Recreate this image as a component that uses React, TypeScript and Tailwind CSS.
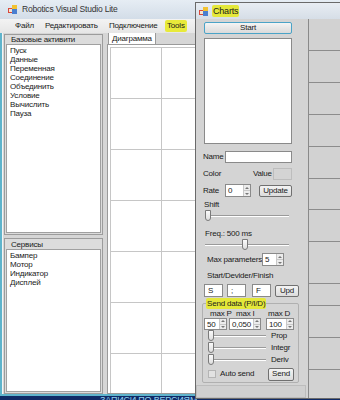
import React from "react";

const font = { fontFamily: '"Liberation Sans", Arial, sans-serif' };

function AppIcon() {
  return (
    <svg width="10" height="9" viewBox="0 0 10 9">
      <rect x="0" y="3" width="5" height="5" fill="#d9483b" />
      <rect x="4" y="0" width="5" height="5" fill="#f2c230" />
      <rect x="4" y="4" width="5" height="5" fill="#4a7fd0" />
      <rect x="1" y="4" width="3" height="3" fill="#f5e6d0" />
    </svg>
  );
}

function Spin({ value, w }: { value: string; w: string }) {
  return (
    <div className={`flex h-full border border-[#8a8a8a] bg-white ${w}`}>
      <span className="flex-1 pl-[2px] leading-[11px]">{value}</span>
      <div className="flex w-[7px] flex-col border-l border-[#c8c8c8] bg-[#ececec]">
        <div className="flex flex-1 items-center justify-center border-b border-[#c8c8c8]">
          <div className="h-0 w-0 border-x-[2px] border-b-[2px] border-x-transparent border-b-[#777]" />
        </div>
        <div className="flex flex-1 items-center justify-center">
          <div className="h-0 w-0 border-x-[2px] border-t-[2px] border-x-transparent border-t-[#777]" />
        </div>
      </div>
    </div>
  );
}

function Button({ label, w, h = "h-[12px]" }: { label: string; w: string; h?: string }) {
  return (
    <div
      className={`flex ${h} ${w} items-center justify-center rounded-[2px] border border-[#707070] bg-gradient-to-b from-[#f4f4f4] to-[#dcdcdc] leading-none`}
    >
      {label}
    </div>
  );
}

function Slider({ pos, w }: { pos: number; w: string }) {
  return (
    <div className={`relative h-[12px] ${w}`}>
      <div className="absolute left-0 right-0 top-[5px] h-[2px] border-t border-[#9a9a9a] border-b border-b-white" />
      <div
        className="absolute top-0 h-[11px] w-[6px] rounded-b-[3px] border border-[#7a7a7a] bg-gradient-to-b from-[#fafafa] to-[#dedede]"
        style={{ left: pos }}
      />
    </div>
  );
}

function Box({ text, w }: { text?: string; w: string }) {
  return (
    <div className={`h-full border border-[#8a8a8a] bg-white pl-[3px] leading-[12px] ${w}`}>{text}</div>
  );
}

const basic = ["Пуск", "Данные", "Переменная", "Соединение", "Объединить", "Условие", "Вычислить", "Пауза"];
const services = ["Бампер", "Мотор", "Индикатор", "Дисплей"];
const chartLines = [50, 82, 114, 146, 178, 209, 241, 283, 305, 337, 369];

export default function App() {
  return (
    <div
      className="relative h-[400px] w-[340px] overflow-hidden whitespace-nowrap bg-[#0f2a66] text-[8px] tracking-[-0.2px] text-[#1a1a1a]"
      style={font}
    >
      {/* main window */}
      <div className="absolute left-0 top-0 flex h-[396px] w-[340px] flex-col bg-[#5fb4cc] px-[2px] pb-[2px]">
        <div className="-mx-[2px] flex h-[19px] items-center gap-[4px] bg-gradient-to-b from-[#e6edf4] to-[#d3dde8] pl-[8px] text-[8.5px] text-[#333]">
          <AppIcon />
          <span>Robotics Visual Studio Lite</span>
        </div>
        <div className="-mx-[2px] flex h-[14px] items-center bg-gradient-to-b from-[#f3f3f3] to-[#e6e6e6] pl-[15px] text-[8px]">
          <span className="w-[30px]">Файл</span>
          <span className="w-[64px]">Редактировать</span>
          <span className="w-[56px]">Подключение</span>
          <span className="rounded-[2px] bg-[#e8ea3a] px-[2px]">Tools</span>
        </div>
        <div className="flex flex-1 overflow-hidden bg-[#d6d6d6]">
          {/* left column */}
          <div className="flex w-[103px] shrink-0 flex-col gap-[3px] border-l border-[#f4f4f4] pl-[1px] pr-[2px] pt-[1px]">
            <div className="flex h-[201px] flex-col border border-[#9c9c9c] bg-[#dcdcdc] p-[1px]">
              <div className="h-[8px] pl-[5px] leading-[8px]">Базовые активити</div>
              <div className="flex-1 border border-[#a0a0a0] bg-white pl-[3px] pt-[1px]">
                {basic.map((b) => (
                  <div key={b} className="h-[9px] leading-[9px]">
                    {b}
                  </div>
                ))}
              </div>
            </div>
            <div className="flex flex-1 flex-col border border-[#9c9c9c] bg-[#dcdcdc] p-[1px]">
              <div className="h-[9px] pl-[5px] leading-[9px]">Сервисы</div>
              <div className="flex-1 border border-[#a0a0a0] bg-white pl-[3px] pt-[1px]">
                {services.map((s) => (
                  <div key={s} className="h-[9px] leading-[9px]">
                    {s}
                  </div>
                ))}
              </div>
            </div>
          </div>
          {/* tab control */}
          <div className="flex min-w-0 flex-1 flex-col pl-[2px]">
            <div className="flex h-[11px] items-end">
              <div className="ml-[1px] h-[12px] border border-b-0 border-[#9a9a9a] bg-white px-[3px] leading-[12px]">Диаграмма</div>
            </div>
            <div className="flex-1 overflow-hidden border border-[#9a9a9a] bg-white p-[2px]">
              <div className="grid w-[256px] grid-cols-[repeat(5,51px)] border-l border-t border-[#c6c6c6]">
                {Array.from({ length: 35 }).map((_, i) => (
                  <div key={i} className="h-[51px] border-b border-r border-[#c6c6c6]" />
                ))}
              </div>
            </div>
          </div>
        </div>
      </div>

      {/* taskbar strip */}
      <div className="absolute bottom-0 left-[100px] h-[4px] overflow-hidden text-[9px] leading-[4px] text-[#8fd0f0]">
        <span className="relative top-[2px]">ЗАПИСИ ПО ВЕРСИЯМ</span>
      </div>

      {/* Charts window */}
      <div className="absolute left-[195px] top-[2px] flex h-[397px] w-[150px] flex-col border border-[#6a6a6a] bg-[#d4d4d4]">
        <div className="flex h-[16px] items-center gap-[3px] bg-gradient-to-b from-[#e8edf3] to-[#d6dee7] pl-[3px] text-[9px]">
          <AppIcon />
          <span className="rounded-[2px] bg-[#e4e83a] px-[1px] leading-[12px]">Charts</span>
        </div>
        <div className="flex flex-1">
          <div className="flex w-[112px] shrink-0 flex-col">
            <div className="ml-[8px] mt-[3px]">
              <div className="flex h-[12px] w-[88px] items-center justify-center rounded-[2px] border border-[#4aa3c7] bg-gradient-to-b from-[#f4f4f4] to-[#dadada] leading-none">
                Start
              </div>
            </div>
            <div className="ml-[8px] mt-[4px] h-[106px] w-[88px] border border-[#8a8a8a] bg-white" />
            <div className="mt-[7px] flex h-[12px] items-center pl-[7px]">
              <span className="w-[22px]">Name</span>
              <Box w="w-[67px]" />
            </div>
            <div className="mt-[5px] flex h-[12px] items-center pl-[7px]">
              <span className="w-[50px]">Color</span>
              <span className="w-[20px]">Value</span>
              <div className="h-[12px] w-[19px] border border-[#bdbdbd] bg-[#d4d4d4]" />
            </div>
            <div className="mt-[4px] flex h-[13px] items-center pl-[7px]">
              <span className="w-[22px]">Rate</span>
              <Spin value="0" w="w-[26px]" />
              <div className="ml-[8px]">
                <Button label="Update" w="w-[33px]" />
              </div>
            </div>
            <div className="mt-[3px] h-[10px] pl-[8px] leading-[10px]">Shift</div>
            <div className="pl-[9px]">
              <Slider pos={0} w="w-[84px]" />
            </div>
            <div className="mt-[7px] h-[10px] pl-[9px] leading-[10px]">Freq.: 500 ms</div>
            <div className="pl-[9px]">
              <Slider pos={37} w="w-[84px]" />
            </div>
            <div className="mt-[2px] flex h-[13px] items-center pl-[11px]">
              <span className="w-[55px]">Max parameters</span>
              <Spin value="5" w="w-[22px]" />
            </div>
            <div className="mt-[5px] h-[10px] pl-[11px] leading-[10px]">Start/Devider/Finish</div>
            <div className="mt-[3px] flex h-[13px] items-center pl-[8px]">
              <Box text="S" w="w-[19px]" />
              <div className="ml-[4px] h-full">
                <Box text=";" w="w-[19px]" />
              </div>
              <div className="ml-[6px] h-full">
                <Box text="F" w="w-[19px]" />
              </div>
              <div className="ml-[4px]">
                <Button label="Upd" w="w-[24px]" h="h-[12px]" />
              </div>
            </div>
            <div className="relative ml-[6px] mt-[6px] h-[80px] w-[97px] rounded-[2px] border border-[#b0b0b0] pt-[6px]">
              <span className="absolute -top-[6px] left-[3px] rounded-[2px] bg-[#e4e83a] px-[1px] leading-[11px]">
                Send data (P/I/D)
              </span>
              <div className="flex h-[8px] leading-[8px]">
                <span className="ml-[7px] w-[26px]">max P</span>
                <span className="w-[32px]">max I</span>
                <span>max D</span>
              </div>
              <div className="flex h-[12px] pl-[1px]">
                <Spin value="50" w="w-[23px]" />
                <div className="ml-[2px] h-full">
                  <Spin value="0,050" w="w-[32px]" />
                </div>
                <div className="ml-[5px] h-full">
                  <Spin value="100" w="w-[28px]" />
                </div>
              </div>
              {["Prop", "Integr", "Deriv"].map((l) => (
                <div key={l} className="flex h-[12px] items-center pl-[5px]">
                  <Slider pos={0} w="w-[58px]" />
                  <span className="ml-[5px]">{l}</span>
                </div>
              ))}
              <div className="mt-[1px] flex h-[14px] items-center pl-[5px]">
                <div className="h-[8px] w-[8px] border border-[#b5b5b5] bg-[#e2e2e2]" />
                <span className="ml-[4px] w-[48px]">Auto send</span>
                <Button label="Send" w="w-[26px]" h="h-[13px]" />
              </div>
            </div>
            <div className="mt-[2px] h-[13px] w-[110px] border border-[#bdbdbd] bg-[#d0d0d0]" />
          </div>
          <div className="relative flex-1 border-l border-[#8a8a8a] bg-[#d2d2d2]">
            {chartLines.map((y) => (
              <div key={y} className="absolute left-0 right-0 h-px bg-[#8c8c8c]" style={{ top: y - 19 }} />
            ))}
          </div>
        </div>
      </div>
    </div>
  );
}
